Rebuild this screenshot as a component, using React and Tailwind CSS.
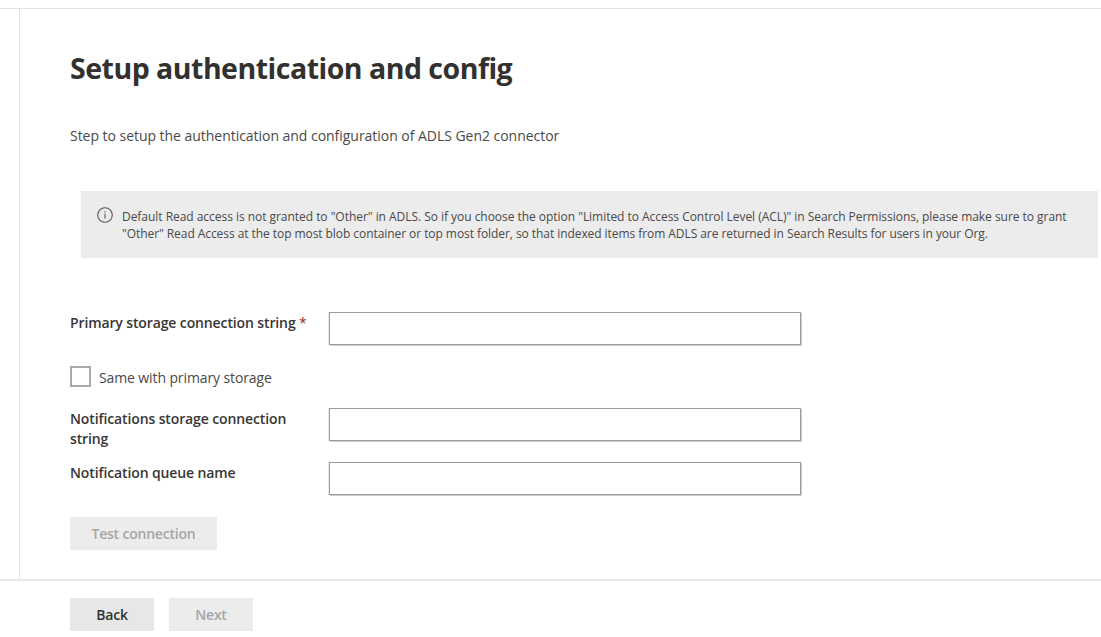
function Field({ label, required, className }) {
  return (
    <div className={`flex ${className}`}>
      <label className="w-[259px] shrink-0 whitespace-pre-line text-[14px] leading-[20px] font-semibold tracking-[-0.12px] text-[#373635]">
        {label}
        {required && <span className="font-normal text-[#a4262c]"> *</span>}
      </label>
      <input type="text" className="mt-[-1px] h-[33px] w-[472px] border border-[#9c9c9c] bg-white px-2 shadow-[1px_1px_0_#cdcdcd,-1px_0_0_#ececec] outline-none" />
    </div>
  );
}

export default function App() {
  return (
    <div className="flex h-[637px] w-[1101px] flex-col overflow-hidden bg-white pt-[8px] font-['Open_Sans','Noto_Sans',sans-serif] text-[#4a4948]">
      <div className="flex h-[573px] shrink-0 border-t border-b-2 border-t-[#e1e1e1] border-b-[#e8e8e8]">
        <aside className="w-[20px] shrink-0 border-r border-[#e4e4e4]" />
        <main className="flex w-[1081px] flex-col pl-[50px]">
          <h1 className="mt-[39px] h-[40px] text-[28.5px] leading-[40px] font-bold tracking-[-0.5px] whitespace-nowrap text-[#323130]">
            <span>Setup authentication and config</span>
          </h1>
          <p className="mt-[38px] h-[20px] text-[14px] leading-[20px] tracking-[-0.035px] whitespace-nowrap">
            <span>Step to setup the authentication and configuration of ADLS Gen2 connector</span>
          </p>
          <div className="mt-[45px] ml-[11px] flex h-[67px] w-[1017px] shrink-0 bg-[#ececec] pt-[16px] pl-[16px]">
            <svg viewBox="0 0 16 16" className="h-[16px] w-[16px] shrink-0" fill="none" stroke="#555453">
              <circle cx="8" cy="8" r="7.3" strokeWidth="1.1" />
              <path d="M8 6.7v4.8" strokeWidth="1.1" />
              <path d="M8 4.3v1.2" strokeWidth="1.2" />
            </svg>
            <p className="ml-[9px] pt-px text-[12px] leading-[17px] whitespace-nowrap">
              <span className="tracking-[-0.037px]">Default Read access is not granted to "Other" in ADLS. So if you choose the option "Limited to Access Control Level (ACL)" in Search Permissions, please make sure to grant</span>
              <br />
              <span className="tracking-[-0.064px]">"Other" Read Access at the top most blob container or top most folder, so that indexed items from ADLS are returned in Search Results for users in your Org.</span>
            </p>
          </div>
          <Field className="mt-[55px] h-[33px]" label="Primary storage connection string" required />
          <label className="mt-[19px] flex h-[22px] items-center">
            <span className="h-[21px] w-[21px] border-2 border-[#a9a9a9] bg-white" />
            <span className="mt-[3px] ml-[8px] text-[14px] leading-[20px] tracking-[-0.11px] whitespace-nowrap">Same with primary storage</span>
          </label>
          <Field className="mt-[22px] h-[40px]" label={"Notifications storage connection\nstring"} />
          <Field className="mt-[14px] h-[33px]" label="Notification queue name" />
          <button className="mt-[21px] h-[33px] w-[147px] shrink-0 bg-[#ececec] text-[14px] font-semibold tracking-[-0.2px] whitespace-nowrap text-[#a6a6a6]">
            Test connection
          </button>
        </main>
      </div>
      <footer className="flex gap-[15px] pt-[17px] pl-[70px] text-[14px] font-semibold tracking-[-0.25px]">
        <button className="h-[33px] w-[84px] bg-[#e7e7e7] text-[#323130]">Back</button>
        <button className="h-[33px] w-[84px] bg-[#ececec] text-[#a6a6a6]">Next</button>
      </footer>
    </div>
  );
}
